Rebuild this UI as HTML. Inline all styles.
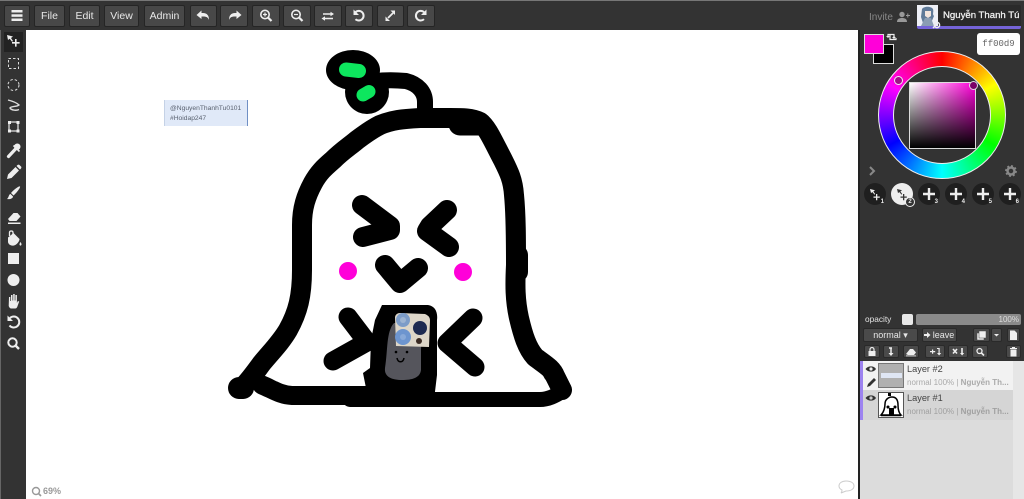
<!DOCTYPE html>
<html><head><meta charset="utf-8"><style>
*{box-sizing:border-box}
html,body{margin:0;padding:0;width:1024px;height:499px;overflow:hidden;background:#fff;font-family:"Liberation Sans",sans-serif}
.a{position:absolute}
.b{position:absolute;top:5px;height:22px;background:#484848;border:1px solid #252525;border-radius:2px;color:#e8e8e8;font-size:10.5px;line-height:20px;text-align:center}
.b svg{position:absolute;left:0;top:0}
.s{position:absolute;background:#4a4a4a;border:1px solid #2a2a2a;border-radius:2px;color:#e6e6e6;font-size:9px;text-align:center}
.s svg{position:absolute;left:0;top:0}
.c{position:absolute;top:183px;width:22px;height:22px;border-radius:50%;background:#1f1f1f}
.c svg{position:absolute;left:0;top:0}
.n{position:absolute;font-size:6px;color:#eee;font-weight:bold;right:2px;bottom:0}
</style></head><body>
<div class="a" style="left:0;top:0;width:1024px;height:30px;background:#333;border-top:1px solid #777"></div>
<div class="a" style="left:0;top:30px;width:26px;height:469px;background:#333"></div>
<div class="a" style="left:0;top:30px;width:1px;height:469px;background:#666"></div>
<div class="a" style="left:858px;top:30px;width:2px;height:469px;background:#222"></div>
<div class="a" style="left:860px;top:30px;width:164px;height:331px;background:#333"></div>
<div class="a" style="left:860px;top:361px;width:153px;height:138px;background:#dcdcdc"></div>
<div class="a" style="left:1013px;top:361px;width:11px;height:138px;background:#e6e6e6"></div>

<div class="b" style="left:4px;width:26px"><svg width="24" height="20" fill="#eee"><rect x="6.500" y="4" width="11" height="2.500"/><rect x="6.500" y="8.300" width="11" height="2.500"/><rect x="6.500" y="12.500" width="11" height="2.500"/></svg></div>
<div class="b" style="left:34px;width:31px">File</div>
<div class="b" style="left:69px;width:31px">Edit</div>
<div class="b" style="left:104px;width:35px">View</div>
<div class="b" style="left:144px;width:41px">Admin</div>
<div class="b" style="left:190px;width:27px"><svg width="25" height="20" fill="#eee"><path d="M10.500 4.500V7H12c4 0 6 2.500 6 7-1-3-3-3.500-6-3.500h-1.500V13L5.500 9z"/></svg></div>
<div class="b" style="left:220px;width:28px"><svg width="26" height="20" fill="#eee"><path d="M15.500 4.500V7H14c-4 0-6 2.500-6 7 1-3 3-3.500 6-3.500h1.500V13L20.500 9z"/></svg></div>
<div class="b" style="left:252px;width:28px"><svg width="26" height="20" fill="none" stroke="#eee" stroke-width="1.600"><circle cx="12" cy="8.500" r="4.200"/><path d="M15 11.500 18.500 15" stroke-width="2.200"/><path d="M10 8.500h4M12 6.500v4" stroke-width="1.200"/></svg></div>
<div class="b" style="left:283px;width:28px"><svg width="26" height="20" fill="none" stroke="#eee" stroke-width="1.600"><circle cx="12" cy="8.500" r="4.200"/><path d="M15 11.500 18.500 15" stroke-width="2.200"/><path d="M10 8.500h4" stroke-width="1.200"/></svg></div>
<div class="b" style="left:314px;width:28px"><svg width="26" height="20" fill="none" stroke="#eee" stroke-width="1.500"><path d="M8 8h8M9 12.500h9"/><path d="M15.500 5.800l3.500 2.200-3.500 2.200zM10 10.300l-3.500 2.200 3.500 2.200z" fill="#eee" stroke="none"/></svg></div>
<div class="b" style="left:345px;width:28px"><svg width="26" height="20" fill="none" stroke="#eee" stroke-width="2"><path d="M9.500 6.200a4.800 4.800 0 1 1 0 7"/><path d="M7.500 3.500V9H13z" fill="#eee" stroke="none"/></svg></div>
<div class="b" style="left:377px;width:27px"><svg width="25" height="20" fill="none" stroke="#eee" stroke-width="1.800"><path d="M10 12 15 7"/><path d="M12.500 4.500h4.500V9zM7.500 10.500V15H12z" fill="#eee" stroke="none"/></svg></div>
<div class="b" style="left:407px;width:28px"><svg width="26" height="20" fill="none" stroke="#eee" stroke-width="2"><path d="M16 6.200a4.800 4.800 0 1 0 0 7"/><path d="M18.500 3.500V9H13z" fill="#eee" stroke="none"/></svg></div>

<div class="a" style="left:4px;top:32px;width:19px;height:20px;background:#222"></div>
<svg class="a" style="left:0;top:30px" width="26" height="330" fill="#eee" stroke="none">
<path d="M7 5l6 1.500-2 1.500 2 3-1 .8-2.300-3L8 10z"/><path d="M15 9h1.600v3h3v1.600h-3v3H15v-3h-3V12h3z"/>
<rect x="8.500" y="28.500" width="10" height="10" fill="none" stroke="#ddd" stroke-dasharray="2.500 2"/>
<circle cx="13.500" cy="55" r="5.500" fill="none" stroke="#ddd" stroke-dasharray="2.500 2"/>
<path d="M8 70c4 1 9 3 11 5-2 2-8 1-9 3 1 2 6 3 9 1.500" fill="none" stroke="#ddd" stroke-width="1.400"/>
<path d="M9 92h9v9H9z" fill="none" stroke="#ddd" stroke-width="1.300"/><path d="M8 91h3v3H8zM16.500 91h3v3h-3zM8 99.500h3v3H8zM16.500 99.500h3v3h-3z"/>
<path d="M8.500 126.500l7.500-8" stroke="#eee" stroke-width="3.200" stroke-linecap="round"/><circle cx="17.300" cy="116.700" r="3.200"/><path d="M13.500 115.500l6 6" stroke="#eee" stroke-width="1.600"/>
<path d="M15.500 137l3.500 3.500-7.500 7.500-4.500 1 1-4.500zM16.500 136l1-1c.8-.5 1.500-.5 2 0l1.500 1.500c.5.5.5 1.200 0 2l-1 1z"/>
<path d="M20 156.500c.8.800-3.500 6.500-6.500 9l-2.500-2.500c2.500-3 8-7.300 9-6.500z"/><path d="M10.500 164c-2 .5-1.500 3.500-3.500 5 3 .5 6-.5 6-2.500z"/>
<path d="M8 189l5.500-6h4l3 3.500-4 4.500H9.500zM8 192.500h12.500v1.500H8z"/>
<path d="M8 207.500l5.500-4.500 6 6c0 2.500-3 6-5.500 6.500-2.500.5-5.500-.5-6-3.500z"/><path d="M9.500 206V202.500c0-2 3.500-2 3.500 0V207" fill="none" stroke="#eee" stroke-width="1.300"/><path d="M20.500 212c1.200 1.800 1.500 3 0 3.700-1.500-.7-1.200-1.900 0-3.700z"/>
<rect x="8" y="223" width="11" height="11"/>
<circle cx="13.500" cy="250" r="6"/>
<path d="M9 267h1.300v4h.7v-6h1.500v5.500h.7V264h1.500v6.500h.7v-5.500h1.500v8l1-2 1.300.5-2 5.500c-.5 1-1 1.500-2 1.500h-4c-1 0-2-1-2.500-2.500z"/>
<path d="M10 288a5.500 5.500 0 1 1-.5 7.500" fill="none" stroke="#eee" stroke-width="2"/><path d="M7.500 285.500v5.500H13z"/>
<circle cx="12.500" cy="312.500" r="4.200" fill="none" stroke="#eee" stroke-width="2"/><path d="M15.500 315.500l3.500 3.500" stroke="#eee" stroke-width="2.400"/>
</svg>

<svg class="a" style="left:26px;top:30px" width="832" height="469">
<g transform="translate(-26 -30)" fill="none" stroke="#000" stroke-linecap="round" stroke-linejoin="round">
<ellipse cx="353" cy="70" rx="27" ry="20" fill="#000" stroke="none"/>
<circle cx="367" cy="92" r="22" fill="#000" stroke="none"/>
<path d="M376 81C385 80 396 80 406 81 418 84 425 92 425 102V115" stroke-width="16"/>
<path d="M346 69.500l13 1.500" stroke="#0de65e" stroke-width="14"/>
<path d="M363 95l6-3.500" stroke="#0de65e" stroke-width="13"/>
<path d="M241 389C250 380 256 371 262 363 272 351 281 342 288 330 298 312 302 296 302 270V225C302 208 306 196 313 183 319 172 325 167 333 160 342 151 350 146 357 140 365 134 372 129 380 125 392 120 402 119 420 118H450C462 118 472 118 480 122 487 127 493 141 503 160 509 172 513 180 514 195 516 215 516 240 516 265 515 285 515 300 519 318 523 335 527 348 535 357 544 364 552 368 555 376L562 390" stroke-width="20"/>
<path d="M262 385C272 389 280 395 292 395.500H367" stroke-width="19"/>
<path d="M350 399.500H540C548 399.500 555 396 563 391" stroke-width="15"/>
<path d="M460 124h20" stroke-width="23"/><path d="M518 255V272" stroke-width="20"/><path d="M239 388h4" stroke-width="22"/><circle cx="553" cy="373" r="10" fill="#000" stroke="none"/>
<path d="M362 205 390 226V230L363 237" stroke-width="20"/>
<path d="M447 210 430 226 427 231 449 247" stroke-width="20"/>
<path d="M385 265 400 283 418 268" stroke-width="20"/>
<path d="M348 317 367 342 333 361" stroke-width="19"/>
<path d="M473 318 447 343 475 367" stroke-width="19"/>
</g>
<g transform="translate(-26 -30)">
<circle cx="348" cy="271" r="9" fill="#ff00d9"/><circle cx="463" cy="272" r="9" fill="#ff00d9"/>
<path d="M382 305H428C435 306 438 312 437 320V375L434 400H350L344 395 366 388 363 373 370 368 371 340 375 320Z" fill="#000"/>
<path d="M394 323H415C420 325 422 335 421 350V370C420 378 412 380 402 380 392 380 384 377 385 368 388 350 386 332 394 323Z" fill="#55555c"/>
<path d="M395 317Q396 313 400 313L425 314Q430 316 430 320L429 347 396 346Z" fill="#ddd6c8"/>
<circle cx="403" cy="320" r="7" fill="#7c9cc8"/><circle cx="403" cy="337" r="8" fill="#6d95cf"/><circle cx="403" cy="337" r="3" fill="#88a9d8"/><circle cx="403" cy="320" r="3" fill="#9db4d2"/>
<circle cx="420" cy="328" r="7" fill="#1d2a50"/><circle cx="419" cy="341" r="3" fill="#3a2a22"/>
<circle cx="396" cy="352" r="1.300" fill="#000"/><circle cx="407" cy="352" r="1.300" fill="#000"/><path d="M397 358c1 5 6 5 7 0" fill="none" stroke="#000" stroke-width="1.500"/>
<circle cx="36" cy="491" r="3.500" fill="none" stroke="#999" stroke-width="1.400"/><path d="M38.500 493.500 41 496" stroke="#999" stroke-width="1.600"/>
<path d="M846 481c5 0 8 2 8 5s-3 5-8 5l-5 2c1-1 1-2 1-3-2-1-3-2-3-4 0-3 3-5 7-5z" fill="#fff" stroke="#ccc"/>
</g>
</svg>
<div class="a" style="left:43px;top:486px;font-size:9px;color:#999;font-weight:bold">69%</div>

<div class="a" style="left:164px;top:100px;width:84px;height:26px;background:#e0e9f8;border-right:1.500px solid #6f8fc4;border-left:1px solid #c5d2e6;font-size:6.700px;line-height:9.500px;color:#5a6270;padding:4px 0 0 5px;white-space:nowrap">@NguyenThanhTu0101<br>#Hoidap247</div>

<div class="a" style="left:869px;top:12px;font-size:10px;color:#888">Invite</div>
<svg class="a" style="left:896px;top:10px" width="14" height="14" fill="#999"><circle cx="6" cy="4.500" r="2.700"/><path d="M1 12c0-3 2-4 5-4s5 1 5 4z"/><path d="M10 5h1.300V3.500h1V5H14v1h-1.700v1.500h-1V6H10z"/></svg>
<div class="a" style="left:917px;top:5px;width:104px;height:24px;background:#2a2a2a;border-bottom:3px solid #7564d8;border-radius:2px"></div>
<svg class="a" style="left:917px;top:5px" width="24" height="24"><rect width="21" height="21" fill="#eef0f6"/><path d="M5 4c2-3 9-3 11 0 1 3-1 5 1 7l-3 7H6L4 12z" fill="#5f7a98"/><path d="M8 6h6v5l-3 2-3-2z" fill="#f2e5dd"/><path d="M4 21l4-8h6l3 8z" fill="#8a9db3"/><circle cx="20" cy="20" r="2.600" fill="none" stroke="#eee" stroke-width="1.500"/><path d="M16 23l3-3" stroke="#eee" stroke-width="1.500"/></svg>
<div class="a" style="left:943px;top:10px;font-size:9.600px;color:#f2f2f2;white-space:nowrap;-webkit-text-stroke:.25px #f2f2f2">Nguyễn Thanh Tú</div>

<div class="a" style="left:873px;top:44px;width:21px;height:20px;background:#000;border:1px solid #ddd"></div>
<div class="a" style="left:864px;top:34px;width:20px;height:20px;background:#ff00d9;border:1px solid #ddd"></div>
<svg class="a" style="left:886px;top:32px" width="12" height="10" fill="none" stroke="#eee" stroke-width="1.200"><path d="M2 4V2.500h6V7M10 6v1.500H4V3"/><path d="M0 4h4L2 6zM6 6h4L8 4z" fill="#eee" stroke="none"/></svg>
<div class="a" style="left:977px;top:33px;width:43px;height:22px;background:#fff;border-radius:3px;font:9px/22px 'Liberation Mono',monospace;color:#666;text-align:center">ff00d9</div>

<div class="a" style="left:878px;top:51px;width:128px;height:128px;border-radius:50%;background:conic-gradient(#f00,#ff0 60deg,#0f0 120deg,#0ff 180deg,#00f 240deg,#f0f 300deg,#f00);border:1px solid #eee"></div>
<div class="a" style="left:893px;top:66px;width:98px;height:98px;border-radius:50%;background:#333;border:1px solid #eee"></div>
<div class="a" style="left:909px;top:82px;width:67px;height:67px;border:1px solid #ddd;background:linear-gradient(to top,#000,rgba(0,0,0,0)),linear-gradient(to right,#fff,#ff00d9)"></div>
<div class="a" style="left:894px;top:76px;width:9px;height:9px;border-radius:50%;border:1.500px solid #eee;background:#a0108a"></div>
<div class="a" style="left:969px;top:81px;width:9px;height:9px;border-radius:50%;border:1.500px solid #ddd;background:#7a0068"></div>
<svg class="a" style="left:867px;top:165px" width="10" height="12" fill="none" stroke="#888" stroke-width="2"><path d="M3 2l4 4-4 4"/></svg>
<svg class="a" style="left:1005px;top:165px" width="12" height="12"><circle cx="6" cy="6" r="3.500" fill="none" stroke="#888" stroke-width="2.500"/><circle cx="6" cy="6" r="5" fill="none" stroke="#888" stroke-width="1.800" stroke-dasharray="2 1.900"/></svg>

<div class="c" style="left:864px"><svg width="22" height="22" fill="#eee"><path d="M6 6l5 1.300-1.600 1.200 1.800 2.500-.8.6-1.900-2.500L7 10z"/><path d="M12 11h1.300v2.500h2.500v1.300h-2.500v2.500H12v-2.500H9.500v-1.300H12z"/></svg><span class="n">1</span></div>
<div class="c" style="left:891px;background:#eee"><svg width="22" height="22" fill="#333"><path d="M6 6l5 1.300-1.600 1.200 1.800 2.500-.8.600-1.900-2.500L7 10z"/><path d="M12 11h1.300v2.500h2.500v1.300h-2.500v2.500H12v-2.500H9.500v-1.300H12z"/></svg><span class="a" style="right:-2px;bottom:-2px;width:10px;height:10px;border-radius:50%;background:#333;border:1px solid #eee;color:#eee;font-size:6px;line-height:8px;text-align:center;font-weight:bold">2</span></div>
<div class="c" style="left:918px"><svg width="22" height="22" fill="#eee"><path d="M9.800 5h2.400v4.800H17v2.400h-4.800V17H9.800v-4.800H5V9.800h4.800z"/></svg><span class="n">3</span></div>
<div class="c" style="left:945px"><svg width="22" height="22" fill="#eee"><path d="M9.800 5h2.400v4.800H17v2.400h-4.800V17H9.800v-4.800H5V9.800h4.800z"/></svg><span class="n">4</span></div>
<div class="c" style="left:972px"><svg width="22" height="22" fill="#eee"><path d="M9.800 5h2.400v4.800H17v2.400h-4.800V17H9.800v-4.800H5V9.800h4.800z"/></svg><span class="n">5</span></div>
<div class="c" style="left:999px"><svg width="22" height="22" fill="#eee"><path d="M9.800 5h2.400v4.800H17v2.400h-4.800V17H9.800v-4.800H5V9.800h4.800z"/></svg><span class="n">6</span></div>

<div class="a" style="left:865px;top:314px;font-size:8.300px;color:#e4e4e4">opacity</div>
<div class="a" style="left:902px;top:314px;width:11px;height:11px;background:#e8e8e8;border-radius:2px"></div>
<div class="a" style="left:916px;top:314px;width:105px;height:11px;background:#8a8a8a;border-radius:2px;font-size:8px;line-height:11px;color:#ddd;text-align:right;padding-right:2px">100%</div>

<div class="s" style="left:863px;top:328px;width:55px;height:14px;line-height:12px">normal ▾</div>
<div class="s" style="left:922px;top:328px;width:35px;height:14px;line-height:12px;white-space:nowrap"><svg width="10" height="12" fill="#eee"><path d="M1 5h3V3l3.500 3L4 9V7H1z"/></svg><span style="margin-left:8px">leave</span></div>
<div class="s" style="left:973px;top:328px;width:17px;height:14px"><svg width="15" height="12" fill="#eee"><rect x="3" y="4" width="7" height="7" stroke="#4a4a4a" stroke-width=".5"/><rect x="5" y="2" width="7" height="7" stroke="#4a4a4a" stroke-width=".5"/></svg></div>
<div class="s" style="left:991px;top:328px;width:11px;height:14px"><svg width="9" height="12" fill="#eee"><path d="M2 5h5L4.500 7.500z"/></svg></div>
<div class="s" style="left:1007px;top:328px;width:13px;height:14px"><svg width="11" height="12" fill="#eee"><path d="M2 1.500h4.500L9 4v7H2z"/></svg></div>

<div class="s" style="left:864px;top:345px;width:16px;height:13px"><svg width="14" height="11" fill="#eee"><rect x="3.500" y="5" width="7" height="5"/><path d="M5 5V3.500a2 2 0 0 1 4 0V5" fill="none" stroke="#eee" stroke-width="1.200"/></svg></div>
<div class="s" style="left:883px;top:345px;width:16px;height:13px"><svg width="14" height="11" fill="none" stroke="#eee" stroke-width="1.500"><path d="M7 2v6M5 2h3"/><path d="M4.500 7h5L7 10z" fill="#eee" stroke="none"/></svg></div>
<div class="s" style="left:903px;top:345px;width:16px;height:13px"><svg width="14" height="11" fill="#eee"><path d="M2 8l4-5h3l3 3.500L10 9H4z"/><path d="M2 9.500h10v.8H2z"/></svg></div>
<div class="s" style="left:925px;top:345px;width:20px;height:13px"><svg width="18" height="11" fill="#eee"><path d="M4 4.500h2V3h1.200v1.500h2v1.200h-2v1.500H6V5.700H4z" transform="translate(0 .5)"/><path d="M12.500 2h1.200v6h-1.200zM11 2h2v1h-2z"/><path d="M11 7h4.200l-2.100 2.500z"/></svg></div>
<div class="s" style="left:948px;top:345px;width:20px;height:13px"><svg width="18" height="11" fill="none" stroke="#eee" stroke-width="1.600"><path d="M4 3l4 4.500M8 3 4 7.500M13 2v6"/><path d="M11 7h4.200l-2.100 2.500z" fill="#eee" stroke="none"/></svg></div>
<div class="s" style="left:972px;top:345px;width:16px;height:13px"><svg width="14" height="11" fill="none" stroke="#eee" stroke-width="1.300"><circle cx="6.500" cy="5" r="2.500"/><path d="M8.500 7l2.500 2.500" stroke-width="1.600"/></svg></div>
<div class="s" style="left:1006px;top:345px;width:15px;height:13px"><svg width="13" height="11" fill="#eee"><path d="M3.500 3.500h6v7h-6zM3 2h7v1H3zM5 1h3v1H5z"/></svg></div>

<div class="a" style="left:860px;top:361px;width:153px;height:29px;background:#f2f2f2;border-left:3px solid #9d83f0"></div>
<div class="a" style="left:860px;top:390px;width:153px;height:30px;background:#d5d5d5;border-left:3px solid #9d83f0"></div>
<svg class="a" style="left:865px;top:364px" width="12" height="50"><path d="M.5 5C3 1.500 9 1.500 11 5 9 8.500 3 8.500.5 5z" fill="#333"/><circle cx="6" cy="5" r="1.600" fill="#eee"/><path d="M9 14l2 2-6 6-3 1 1-3z" fill="#333"/><path d="M.5 34C3 30.500 9 30.500 11 34 9 37.500 3 37.500.5 34z" fill="#333"/><circle cx="6" cy="34" r="1.600" fill="#ccc"/></svg>
<div class="a" style="left:878px;top:363px;width:26px;height:25px;background:#b0b0b0;border:1px solid #777"><div class="a" style="left:2px;top:9px;width:21px;height:5px;background:#dfe6f4"></div></div>
<div class="a" style="left:878px;top:392px;width:26px;height:26px;background:#fff;border:1px solid #555"><svg width="24" height="24" fill="none" stroke="#000" stroke-width="1.500"><path d="M2 22C5 19 6 14 6 11 6 6 10 4 13 4 18 4 19 8 19 12 19 17 20 20 22 22Z"/><path d="M2 22.500H22"/><path d="M9 1.500h3" stroke-width="3"/><rect x="10" y="15" width="5" height="7" fill="#000" stroke="none"/><circle cx="9" cy="14" r=".8" fill="#f0c"/><circle cx="16" cy="14" r=".8" fill="#f0c"/></svg></div>
<div class="a" style="left:907px;top:364px;font-size:9.200px;color:#444">Layer #2</div>
<div class="a" style="left:907px;top:393px;font-size:9.200px;color:#444">Layer #1</div>
<div class="a" style="left:907px;top:378px;font-size:8px;color:#aaa;white-space:nowrap">normal 100% | <b>Nguyễn Th...</b></div>
<div class="a" style="left:907px;top:407px;font-size:8px;color:#a0a0a0;white-space:nowrap">normal 100% | <b>Nguyễn Th...</b></div>
</body></html>
